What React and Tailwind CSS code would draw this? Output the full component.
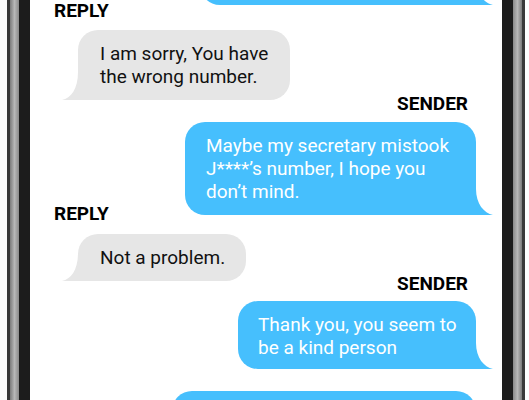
import React from "react";

function GrayTail() {
  return (
    <svg className="absolute bottom-0 left-[-16px]" width="17" height="28" viewBox="0 0 17 28">
      <path d="M16 0 C16 17 9 26 0 28 L17 28 L17 0 Z" fill="#e6e6e6" />
    </svg>
  );
}

function BlueTail() {
  return (
    <svg className="absolute bottom-0 right-[-17px]" width="18" height="26" viewBox="0 0 18 26">
      <path d="M1 0 C1 15 9 24 18 26 L0 26 L0 0 Z" fill="#46bffd" />
    </svg>
  );
}

function Label({ children, className }) {
  return (
    <div className={"text-[19px] leading-[22px] font-bold text-black " + className}>{children}</div>
  );
}

export default function App() {
  return (
    <div className="w-[529px] h-[400px] overflow-hidden bg-white flex font-[Roboto,sans-serif]">
      <div className="w-[7px] h-full bg-white" />
      <div className="w-[3px] h-full bg-[#3a3a3a]" />
      <div className="w-[9px] h-full bg-gradient-to-r from-[#7c7c7c] via-[#b8b8b8] to-[#8a8a8a]" />
      <div className="w-[11px] h-full bg-[#1c1c1c]" />
      <div className="w-[472px] h-full bg-white overflow-hidden">
        <div className="flex flex-col pl-6 pr-[26px]">
          <div className="self-end relative mt-[-60px] h-[65px] w-[276px] rounded-[20px] rounded-br-none bg-[#46bffd]">
            <BlueTail />
          </div>

          <Label className="mt-[-5px]">REPLY</Label>
          <div className="relative ml-6 mt-2 w-[212px] rounded-[20px] rounded-bl-none bg-[#e6e6e6] pl-[22px] pr-[16px] py-3 text-[19px] leading-[23px] text-[#111]">
            I am sorry, You have the wrong number.
            <GrayTail />
          </div>

          <Label className="self-end mr-2 mt-[-7px]">SENDER</Label>
          <div className="self-end relative mt-[7px] w-[291px] rounded-[20px] rounded-br-none bg-[#46bffd] pl-[21px] pr-[18px] py-3 text-[19px] leading-[23px] text-white">
            Maybe my secretary mistook J****’s number, I hope you don’t mind.
            <BlueTail />
          </div>

          <Label className="mt-[-12px]">REPLY</Label>
          <div className="self-start relative ml-6 mt-[9px] rounded-[20px] rounded-bl-none bg-[#e6e6e6] pl-[22px] pr-[21px] py-3 text-[19px] leading-[23px] text-[#111]">
            Not a problem.
            <GrayTail />
          </div>

          <Label className="self-end mr-2 mt-[-8px]">SENDER</Label>
          <div className="self-end relative mt-[6px] w-[238px] rounded-[20px] rounded-br-none bg-[#46bffd] pl-[20px] pr-[16px] pt-3 pb-[10px] text-[19px] leading-[23px] text-white">
            Thank you, you seem to be a kind person
            <BlueTail />
          </div>

          <div className="self-end relative mt-[22px] h-[70px] w-[304px] rounded-[20px] rounded-br-none bg-[#46bffd]">
            <BlueTail />
          </div>
        </div>
      </div>
      <div className="w-[11px] h-full bg-[#1c1c1c]" />
      <div className="w-[9px] h-full bg-gradient-to-r from-[#8a8a8a] via-[#b8b8b8] to-[#7c7c7c]" />
      <div className="w-[3px] h-full bg-[#3a3a3a]" />
      <div className="w-[4px] h-full bg-white" />
    </div>
  );
}
